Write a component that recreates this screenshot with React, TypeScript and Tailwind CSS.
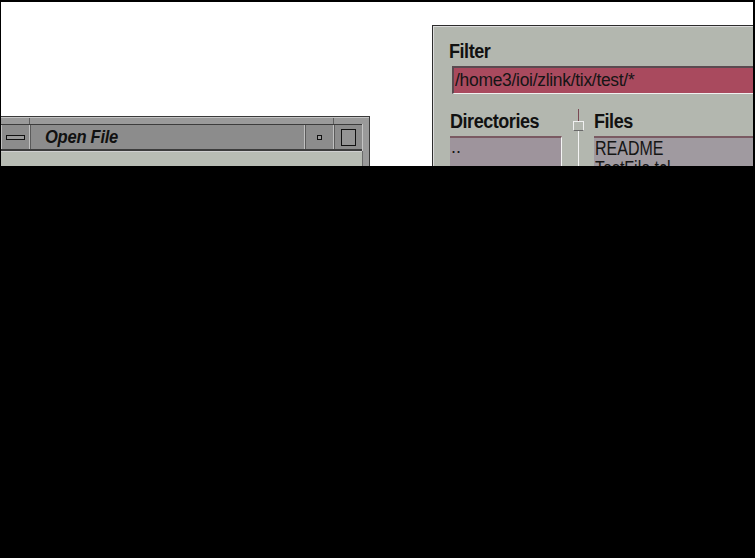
import React from 'react';

const label = "text-[20px] leading-[22px] font-bold tracking-[-0.5px] text-[#111] origin-left scale-x-[0.9] whitespace-nowrap";

function OpenFileWindow() {
  return (
    <div className="mt-[114px] w-[369px] shrink-0 border-t border-r border-[#3a3a3a] bg-[#9a9a9a]">
      {/* frame top with resize handle notches */}
      <div className="flex h-[7px] border-t border-[#c4c4c4]">
        <div className="w-[29px] border-r border-[#5e5e5e]" />
        <div className="w-[304px] border-r border-[#5e5e5e]" />
        <div className="flex-1" />
      </div>
      <div className="flex">
        <div className="flex h-[27px] w-[361px] border-t border-b-2 border-[#3c3c3c] bg-[#8c8c8c]">
          <div className="flex w-[29px] items-center justify-center border-r border-[#c0c0c0] border-l border-l-[#c0c0c0]">
            <div className="h-[5px] w-[19px] border border-[#111] bg-[#9a9a9a]" />
          </div>
          <div className="flex w-[275px] items-center border-l border-[#5a5a5a] border-r border-r-[#c0c0c0] pl-[14px]">
            <div className="origin-left scale-x-[0.92] text-[18px] font-bold italic tracking-[-0.3px] text-[#111]">
              Open File
            </div>
          </div>
          <div className="flex w-[29px] items-center justify-center border-l border-[#5a5a5a] border-r border-r-[#c0c0c0]">
            <div className="h-[5px] w-[5px] border border-[#111] bg-[#9a9a9a]" />
          </div>
          <div className="flex flex-1 items-center justify-center border-l border-[#5a5a5a]">
            <div className="h-[17px] w-[15px] border border-[#111] bg-[#949494]" />
          </div>
        </div>
        <div className="flex-1 border-l border-[#c4c4c4]" />
      </div>
      <div className="flex">
        <div className="h-[20px] w-[361px] border-t border-[#d0d0d0] bg-[#b8bcb4]" />
        <div className="flex-1 border-l border-[#6a6a6a]" />
      </div>
    </div>
  );
}

function FilterPanel() {
  return (
    <div className="ml-[62px] mt-[23px] h-[200px] min-w-[330px] flex-1 border-t border-l border-[#2c2c2c]">
      <div className="h-full border-t border-l border-[#dcdcdc] bg-[#b3b7af] pl-[15px] pt-[13px]">
        <div className={label}>Filter</div>
        <div className="mt-[4px] ml-[3px] h-[28px] border-t-2 border-l-2 border-[#5a4a50] border-b border-b-[#f0f0f0] bg-[#a94a5e] pl-[1px]">
          <div className="origin-left scale-x-[0.97] whitespace-nowrap text-[18px] leading-[24px] tracking-[-0.3px] text-[#151515]">/home3/ioi/zlink/tix/test/*</div>
        </div>
        <div className="mt-[16px] flex">
          <div className="w-[113px] pl-[1px]">
            <div className={label}>Directories</div>
            <div className="mt-[4px] h-[40px] border-t-2 border-[#7a5a62] border-r border-r-[#f4f4f4] bg-[#9e949c] pl-[1px]">
              <div className="text-[18px] leading-[18px] text-[#151515]">..</div>
            </div>
          </div>
          <div className="flex w-[32px] flex-col items-center">
            <div className="-mt-[1px] h-[12px] w-px bg-[#7a4a54]" />
            <div className="h-[10px] w-[11px] border border-[#f0f0f0] border-b-[#6a6a6a] bg-[#b3b7af]" />
            <div className="h-[40px] w-px bg-[#f4f4f4]" />
          </div>
          <div className="flex-1">
            <div className={label}>Files</div>
            <div className="mt-[4px] h-[44px] border-t-2 border-[#7a5a62] bg-[#a09aa0] pl-[1px]">
              <div className="origin-left scale-x-[0.8] whitespace-nowrap text-[20px] leading-[20px] text-[#151515]">README</div>
              <div className="origin-left scale-x-[0.8] whitespace-nowrap text-[20px] leading-[20px] text-[#151515]">TestFile.tcl</div>
            </div>
          </div>
        </div>
      </div>
    </div>
  );
}

export default function App() {
  return (
    <div className="h-[558px] w-[755px] bg-black" style={{ fontFamily: '"Liberation Sans", Arial, sans-serif' }}>
      <div className="flex h-[166px] items-start overflow-hidden border-t-2 border-l border-r-2 border-black bg-white">
        <OpenFileWindow />
        <FilterPanel />
      </div>
    </div>
  );
}
